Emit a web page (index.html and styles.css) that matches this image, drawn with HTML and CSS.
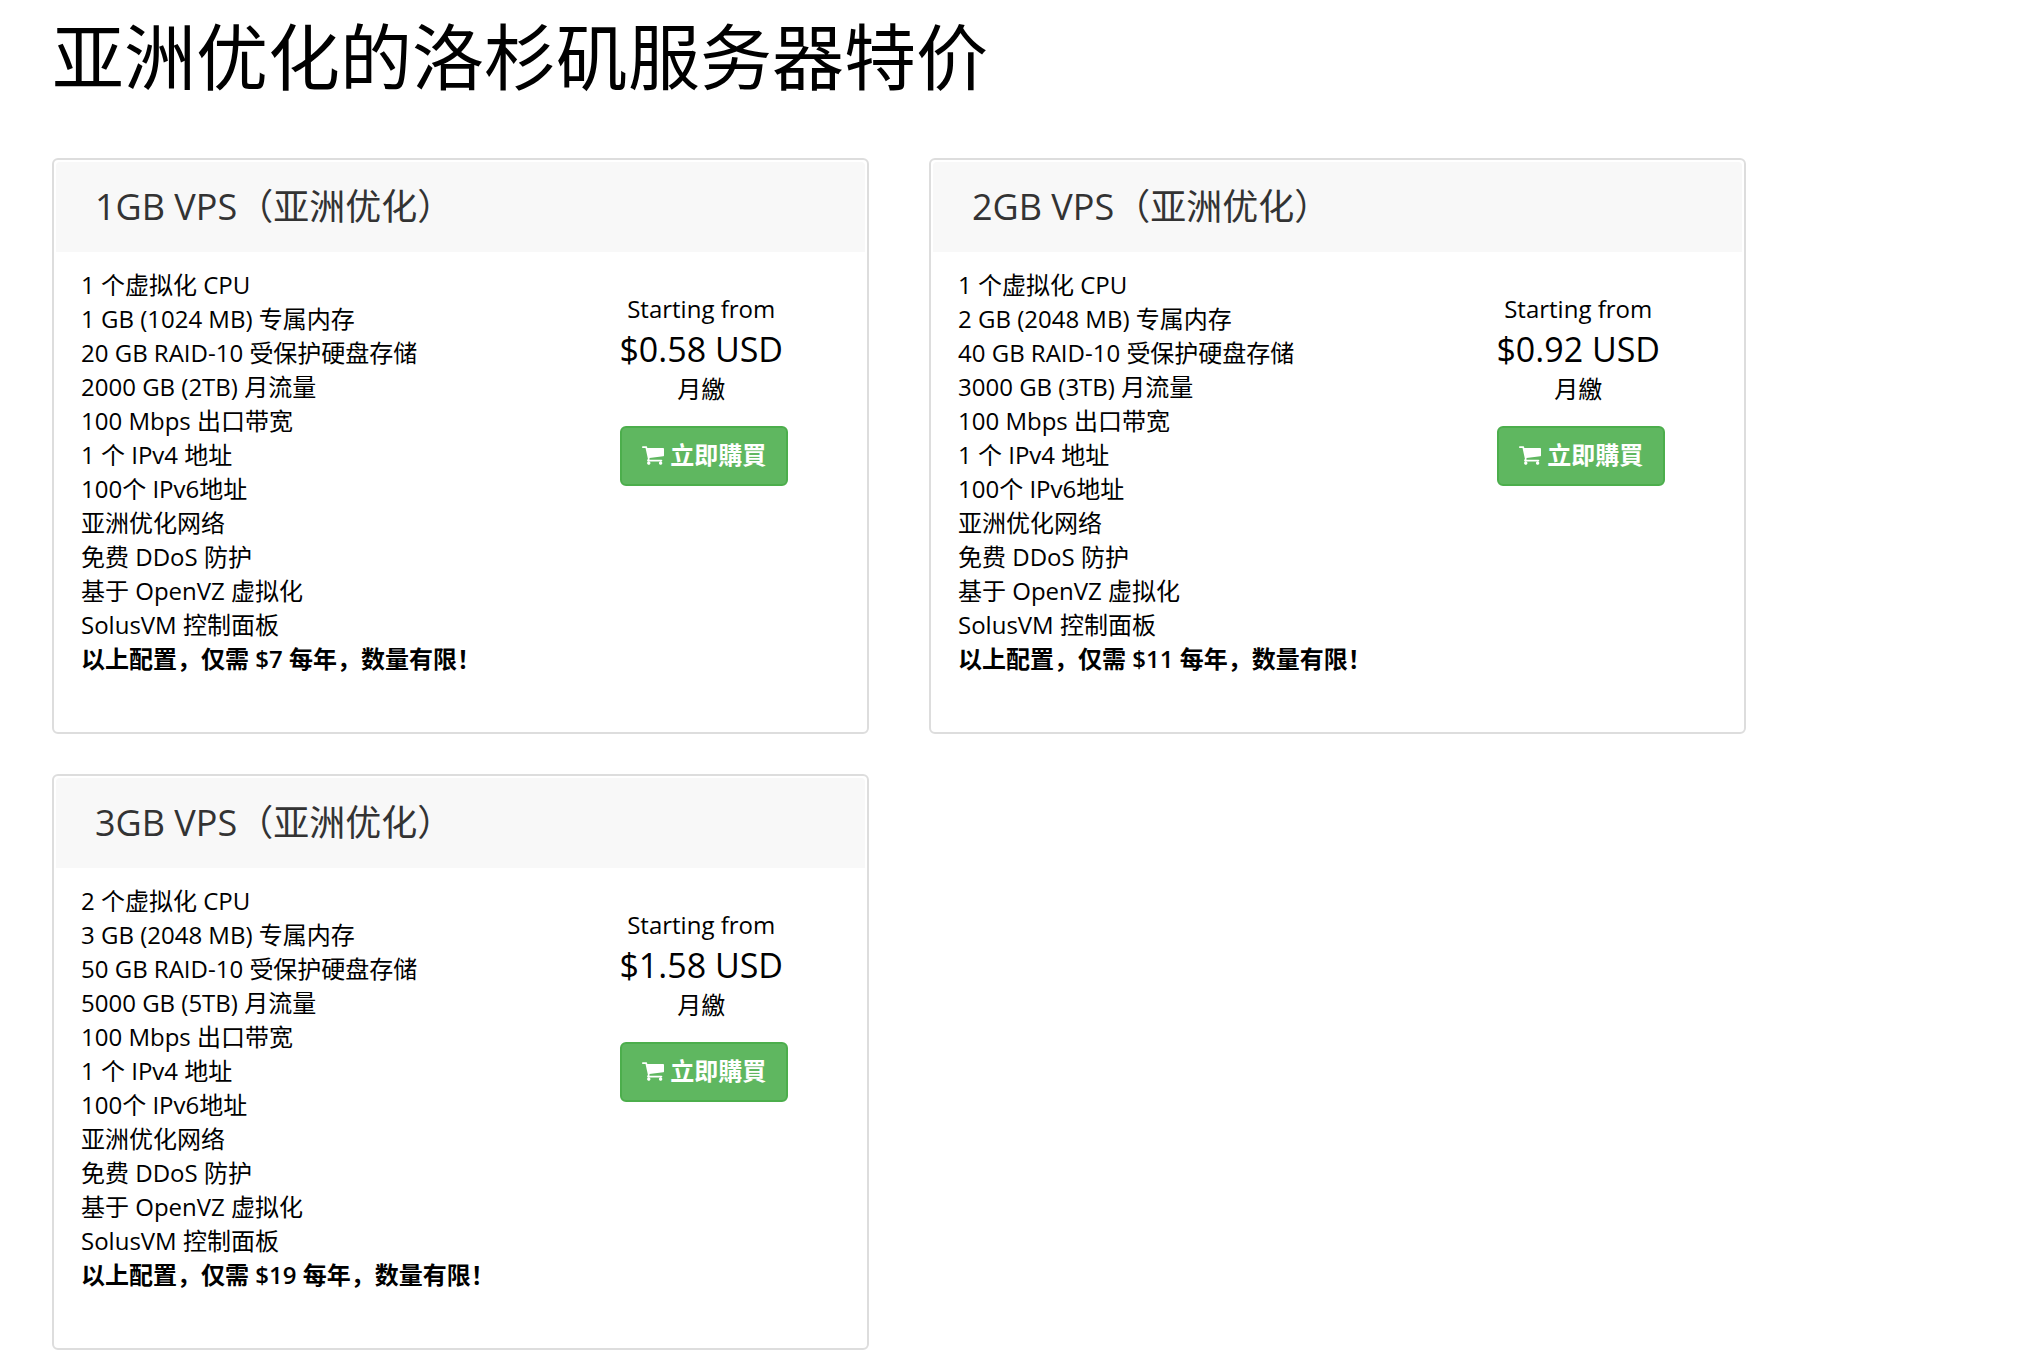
FILE: index.html
```html
<!DOCTYPE html>
<html lang="zh-CN">
<head>
<meta charset="utf-8">
<meta name="viewport" content="width=device-width, initial-scale=1">
<title>亚洲优化的洛杉矶服务器特价</title>
<link rel="stylesheet" href="styles.css">
</head>
<body>
<svg class="sprite" aria-hidden="true">
  <symbol id="cart" viewBox="0 256 1664 1408"><path d="M640 1536q0 52-38 90t-90 38-90-38-38-90 38-90 90-38 90 38 38 90zm896 0q0 52-38 90t-90 38-90-38-38-90 38-90 90-38 90 38 38 90zm128-1088v512q0 24-16.5 42.5t-40.5 21.5l-1044 122q13 60 13 70 0 16-24 64h920q26 0 45 19t19 45-19 45-45 19h-1024q-26 0-45-19t-19-45q0-11 8-31.5t16-36 21.5-40 15.5-29.5l-177-823h-204q-26 0-45-19t-19-45 19-45 45-19h256q16 0 28.5 6.5t19.5 15.5 13 24.5 8 26 5.5 29.5 4.5 26h1201q26 0 45 19t19 45z"/></symbol>
</svg>
<main class="page">
  <h1 class="title">亚洲优化的洛杉矶服务器特价</h1>
  <div class="plans">
    <section class="plan">
      <h2 class="plan-name">1GB VPS（亚洲优化）</h2>
      <div class="plan-body">
        <ul class="specs">
          <li>1 个虚拟化 CPU</li>
          <li>1 GB (1024 MB) 专属内存</li>
          <li>20 GB RAID-10 受保护硬盘存储</li>
          <li>2000 GB (2TB) 月流量</li>
          <li>100 Mbps 出口带宽</li>
          <li>1 个 IPv4 地址</li>
          <li>100个 IPv6地址</li>
          <li>亚洲优化网络</li>
          <li>免费 DDoS 防护</li>
          <li>基于 OpenVZ 虚拟化</li>
          <li>SolusVM 控制面板</li>
          <li class="offer">以上配置，仅需 $7 每年，数量有限！</li>
        </ul>
        <div class="order">
          <div class="cost">
            <span>Starting from</span>
            <span class="price">$0.58 USD</span>
            <span class="cycle" lang="zh-TW">月繳</span>
          </div>
          <button class="buy" type="button" lang="zh-TW"><svg class="icon" aria-hidden="true"><use href="#cart"/></svg>立即購買</button>
        </div>
      </div>
    </section>
    <section class="plan">
      <h2 class="plan-name">2GB VPS（亚洲优化）</h2>
      <div class="plan-body">
        <ul class="specs">
          <li>1 个虚拟化 CPU</li>
          <li>2 GB (2048 MB) 专属内存</li>
          <li>40 GB RAID-10 受保护硬盘存储</li>
          <li>3000 GB (3TB) 月流量</li>
          <li>100 Mbps 出口带宽</li>
          <li>1 个 IPv4 地址</li>
          <li>100个 IPv6地址</li>
          <li>亚洲优化网络</li>
          <li>免费 DDoS 防护</li>
          <li>基于 OpenVZ 虚拟化</li>
          <li>SolusVM 控制面板</li>
          <li class="offer">以上配置，仅需 $11 每年，数量有限！</li>
        </ul>
        <div class="order">
          <div class="cost">
            <span>Starting from</span>
            <span class="price">$0.92 USD</span>
            <span class="cycle" lang="zh-TW">月繳</span>
          </div>
          <button class="buy" type="button" lang="zh-TW"><svg class="icon" aria-hidden="true"><use href="#cart"/></svg>立即購買</button>
        </div>
      </div>
    </section>
    <section class="plan">
      <h2 class="plan-name">3GB VPS（亚洲优化）</h2>
      <div class="plan-body">
        <ul class="specs">
          <li>2 个虚拟化 CPU</li>
          <li>3 GB (2048 MB) 专属内存</li>
          <li>50 GB RAID-10 受保护硬盘存储</li>
          <li>5000 GB (5TB) 月流量</li>
          <li>100 Mbps 出口带宽</li>
          <li>1 个 IPv4 地址</li>
          <li>100个 IPv6地址</li>
          <li>亚洲优化网络</li>
          <li>免费 DDoS 防护</li>
          <li>基于 OpenVZ 虚拟化</li>
          <li>SolusVM 控制面板</li>
          <li class="offer">以上配置，仅需 $19 每年，数量有限！</li>
        </ul>
        <div class="order">
          <div class="cost">
            <span>Starting from</span>
            <span class="price">$1.58 USD</span>
            <span class="cycle" lang="zh-TW">月繳</span>
          </div>
          <button class="buy" type="button" lang="zh-TW"><svg class="icon" aria-hidden="true"><use href="#cart"/></svg>立即購買</button>
        </div>
      </div>
    </section>
  </div>
</main>
</body>
</html>
```
FILE: styles.css
```css
* {
  box-sizing: border-box;
}

body {
  margin: 0;
  background: #fff;
  color: #000;
  font-family: "Open Sans", "Noto Sans CJK SC", sans-serif;
  font-size: 24px;
  line-height: 34px;
}

.sprite {
  display: none;
}

.page {
  max-width: 1798px;
  padding: 16px 52px;
}

.title {
  margin: 0 0 62px;
  font-size: 72px;
  font-weight: 400;
  line-height: 80px;
}

.plans {
  display: grid;
  grid-template-columns: repeat(auto-fit, minmax(min(100%, 640px), 1fr));
  gap: 40px 60px;
}

.plan {
  padding: 2px;
  border: 2px solid #ddd;
  border-radius: 6px;
}

.plan-name {
  margin: 0;
  padding: 20px 39px;
  border-radius: 4px 4px 0 0;
  background: #f8f8f8;
  color: #333;
  font-size: 36px;
  font-weight: 400;
  line-height: 50px;
}

.plan-body {
  display: flex;
  justify-content: space-between;
  padding: 16px 76px 54px 25px;
}

.specs {
  margin: 0;
  padding: 0;
  list-style: none;
}

.offer {
  font-weight: 600;
}

.order {
  display: flex;
  flex-direction: column;
  align-items: center;
  gap: 20px;
  padding-top: 24px;
}

.cost {
  display: flex;
  flex-direction: column;
  align-items: center;
  padding-right: 6px;
}

.price {
  font-size: 34px;
  line-height: 46px;
}

.cycle,
.buy {
  font-family: "Open Sans", "Noto Sans CJK TC", sans-serif;
}

.buy {
  display: flex;
  align-items: center;
  gap: 6px;
  padding: 10px 20px 12px;
  border: 2px solid #4cae4c;
  border-radius: 6px;
  background: #5fb760;
  color: #fff;
  font-size: 24px;
  font-weight: 600;
  line-height: 34px;
  cursor: pointer;
}

.icon {
  width: 22px;
  height: 19px;
  fill: currentColor;
}
```
